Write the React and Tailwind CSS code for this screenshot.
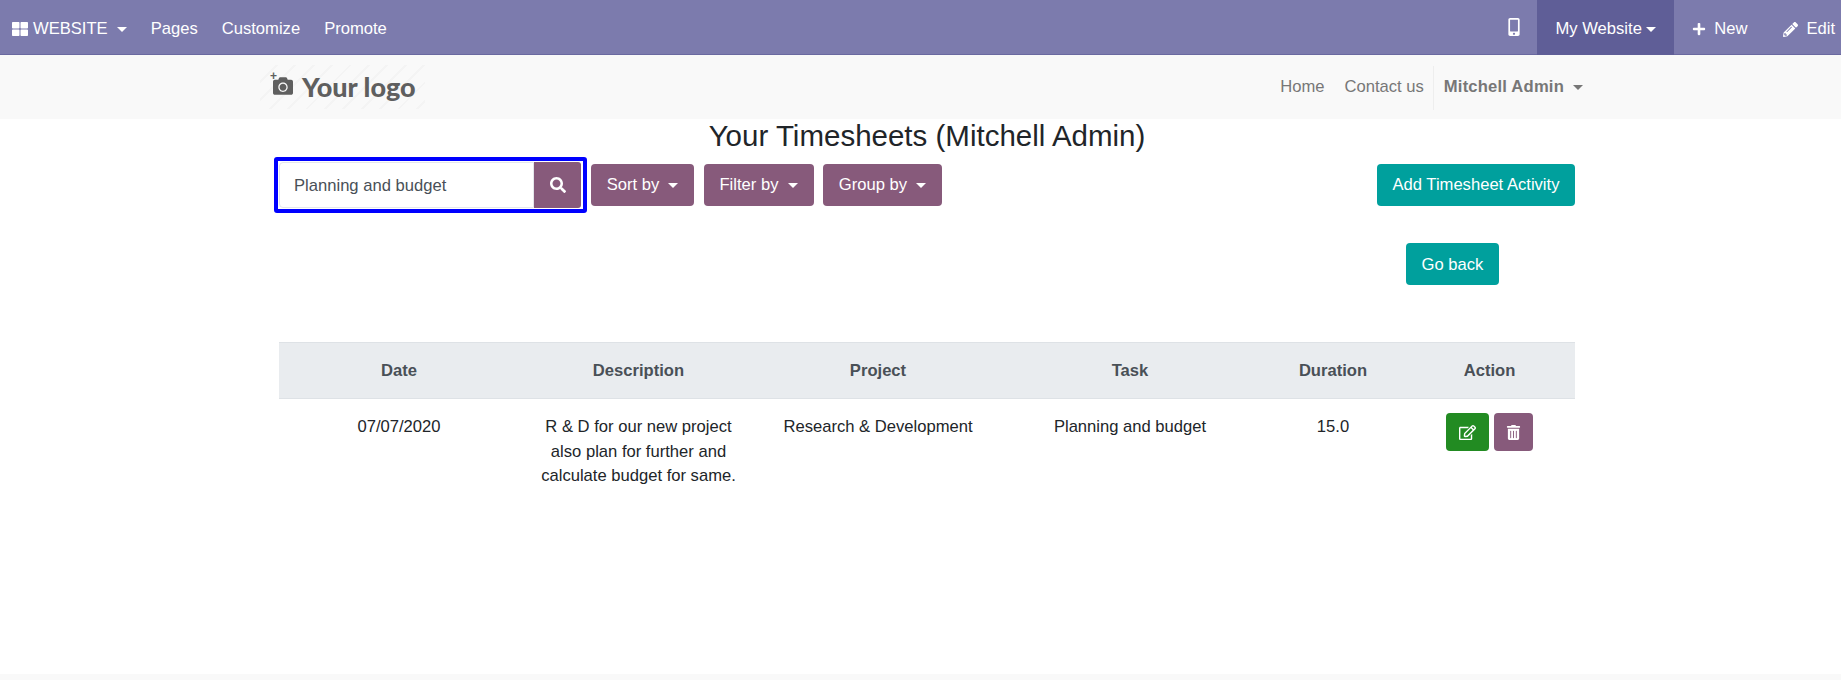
import { FaMobileAlt, FaPlus, FaPencilAlt, FaSearch, FaRegEdit, FaTrashAlt, FaThLarge, FaCamera } from "react-icons/fa";

const Caret = ({ className = "" }) => (
  <span className={"inline-block w-0 h-0 border-x-[5px] border-x-transparent border-t-[5px] border-t-current " + className} />
);

const FilterButton = ({ label, width }) => (
  <button className={"h-[42px] pt-[1px] rounded-[4px] bg-[#875a7b] text-white flex items-center justify-center gap-[9px] " + width}>
    {label}
    <Caret />
  </button>
);

const App = () => {
  return (
    <div className="min-h-[680px] h-[680px] flex flex-col bg-white text-[16.6px] text-[#212529] font-['Liberation_Sans',Arial,sans-serif]">
      {/* top bar */}
      <nav className="h-[55px] shrink-0 flex items-stretch justify-between bg-[#7c7bad] text-white border-b border-[#6a69a0]">
        <div className="flex items-center pl-[12px] pt-[4px]">
          <FaThLarge className="text-[16px] mr-[5px]" />
          <span>WEBSITE</span>
          <Caret className="ml-[9px] mr-[24px]" />
          <span className="mr-[24px]">Pages</span>
          <span className="mr-[24px]">Customize</span>
          <span>Promote</span>
        </div>
        <div className="flex items-stretch">
          <div className="flex items-center pr-[14px]">
            <FaMobileAlt className="text-[18px]" />
          </div>
          <div className="w-[137px] h-[55px] bg-[#5f5e97] flex items-center justify-center gap-[4px] pt-[3px]">
            My Website
            <Caret />
          </div>
          <div className="flex items-center pl-[18px] pr-[36px] pt-[4px]">
            <FaPlus className="text-[14px] mr-[8px]" />
            New
          </div>
          <div className="flex items-center pr-[6px] pt-[4px]">
            <FaPencilAlt className="text-[15px] mr-[8px]" />
            Edit
          </div>
        </div>
      </nav>

      {/* website header */}
      <header className="h-[64px] shrink-0 bg-[#f9f9f9] flex items-center justify-between pl-[260px] pr-[258px]">
        <div className="w-[165px] h-[44px] flex items-center gap-[9px] pl-[13px] pb-[2px] bg-[repeating-linear-gradient(135deg,#f9f9f9_0px,#f9f9f9_11px,#f4f4f4_11px,#f4f4f4_13px)] text-[#5f5f5f]">
          <div className="relative">
            <FaCamera className="text-[20px]" />
            <span className="absolute -left-[3px] -top-[6px] text-[12px] leading-none font-bold">+</span>
          </div>
          <span className="font-['Lato',sans-serif] font-black text-[27px] leading-none">Your logo</span>
        </div>
        <div className="flex items-center h-[44px] pt-[1px] text-[#777777]">
          <span className="mr-[20px]">Home</span>
          <span className="mr-[9px]">Contact us</span>
          <div className="h-[44px] border-l border-[#eeeeee] flex items-center pl-[10px] gap-[9px]">
            <span className="font-bold tracking-[0.2px]">Mitchell Admin</span>
            <Caret />
          </div>
        </div>
      </header>

      {/* content */}
      <main className="flex-1 pl-[279px] pr-[266px] text-center">
        <h3 className="text-[29.5px] leading-[33px] mt-[0px] mb-[5px]">Your Timesheets (Mitchell Admin)</h3>

        <div className="flex items-start text-left">
          <div className="flex h-[56px] w-[313px] -ml-[5px] rounded-[3px] border-[4px] border-[#0000ff] pl-[1px] py-[1px] pr-[2px] shrink-0">
            <div className="flex-1 flex items-center pl-[14px] pt-[2px] text-[#495057] border border-[#e4e7eb] rounded-l-[4px]">Planning and budget</div>
            <div className="w-[47px] bg-[#875a7b] text-white flex items-center justify-center rounded-r-[3px]">
              <FaSearch className="text-[16px]" />
            </div>
          </div>
          <div className="flex gap-[9.5px] ml-[4px] mt-[7px] flex-1">
            <FilterButton label="Sort by" width="w-[103px]" />
            <FilterButton label="Filter by" width="w-[110px]" />
            <FilterButton label="Group by" width="w-[119px]" />
            <button className="ml-auto h-[42px] pt-[1px] w-[198px] rounded-[4px] bg-[#00a09d] text-white">Add Timesheet Activity</button>
          </div>
        </div>

        <div className="flex justify-end mt-[30px] pr-[76px]">
          <button className="h-[42px] pt-[2px] w-[93px] rounded-[4px] bg-[#00a09d] text-white">Go back</button>
        </div>

        <table className="w-full table-fixed border-collapse mt-[57px]">
          <colgroup>
            <col className="w-[240px]" />
            <col className="w-[239px]" />
            <col className="w-[240px]" />
            <col className="w-[264px]" />
            <col className="w-[142px]" />
            <col className="w-[171px]" />
          </colgroup>
          <thead>
            <tr className="h-[56px] bg-[#e9ecef] text-[#495057] border-y border-[#dee2e6] font-bold">
              <th className="pt-[1px]">Date</th>
              <th className="pt-[1px]">Description</th>
              <th className="pt-[1px]">Project</th>
              <th className="pt-[1px]">Task</th>
              <th className="pt-[1px]">Duration</th>
              <th className="pt-[1px]">Action</th>
            </tr>
          </thead>
          <tbody>
            <tr className="align-top leading-[24.5px]">
              <td className="pt-[16px]">07/07/2020</td>
              <td className="pt-[16px] px-[18px]">R &amp; D for our new project also plan for further and calculate budget for same.</td>
              <td className="pt-[16px]">Research &amp; Development</td>
              <td className="pt-[16px]">Planning and budget</td>
              <td className="pt-[16px]">15.0</td>
              <td className="pt-[14px]">
                <div className="flex justify-center gap-[5px]">
                  <button className="w-[43px] h-[38px] rounded-[4px] bg-[#228b22] text-white flex items-center justify-center"><FaRegEdit className="text-[17px]" /></button>
                  <button className="w-[39px] h-[38px] rounded-[4px] bg-[#875a7b] text-white flex items-center justify-center"><FaTrashAlt className="text-[15px]" /></button>
                </div>
              </td>
            </tr>
          </tbody>
        </table>
      </main>

      <footer className="h-[6px] shrink-0 bg-[#f9f9f9]" />
    </div>
  );
};

export default App;
